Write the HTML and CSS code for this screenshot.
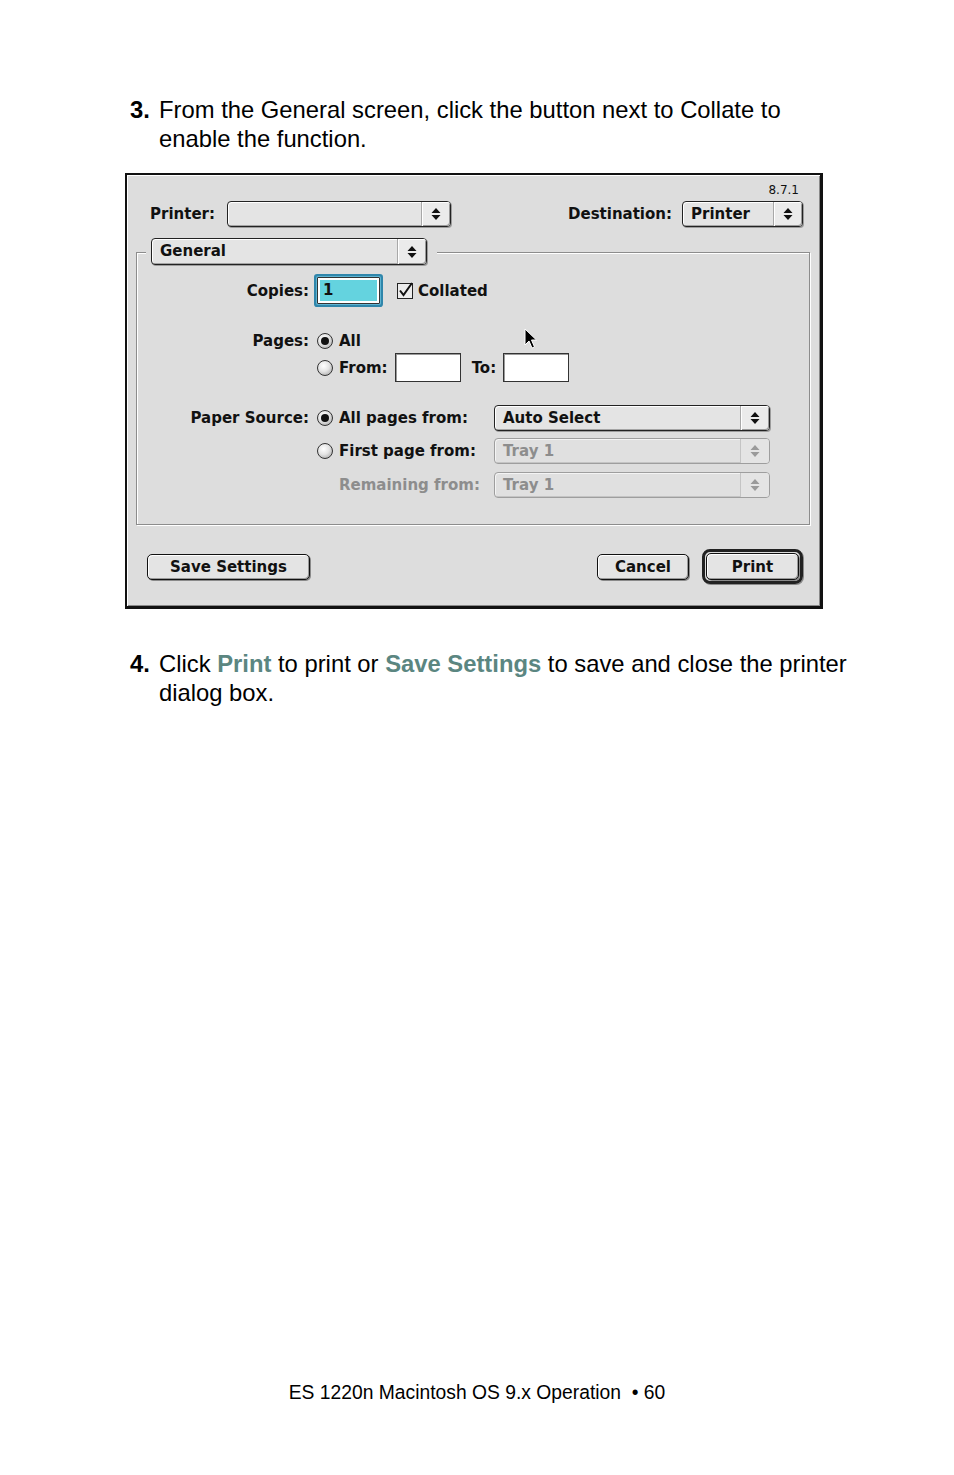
FILE: index.html
```html
<!DOCTYPE html>
<html lang="en">
<head>
    <meta charset="UTF-8">
    <title>Print dialog - General</title>
    <link rel="stylesheet" href="styles.css">
</head>
<body>

<div class="page">
    <div class="step">
        <span class="num">3.</span>
        <p>From the General screen, click the button next to Collate to enable the function.</p>
    </div>

    <div class="dialog">
        <div class="version">8.7.1</div>

        <div class="top-row">
            <span>Printer:</span>
            <div class="popup printer-pop">
                <span class="pop-text"></span>
                <span class="pop-arrow"><svg width="10" height="14" viewBox="0 0 10 14"><path d="M0.5 6 L5 1 L9.5 6 Z M0.5 8 L5 13 L9.5 8 Z"/></svg></span>
            </div>
            <span class="dest-lbl">Destination:</span>
            <div class="popup dest-pop">
                <span class="pop-text">Printer</span>
                <span class="pop-arrow"><svg width="10" height="14" viewBox="0 0 10 14"><path d="M0.5 6 L5 1 L9.5 6 Z M0.5 8 L5 13 L9.5 8 Z"/></svg></span>
            </div>
        </div>

        <div class="group">
            <div class="group-title">
                <div class="popup general-pop">
                    <span class="pop-text">General</span>
                    <span class="pop-arrow"><svg width="10" height="14" viewBox="0 0 10 14"><path d="M0.5 6 L5 1 L9.5 6 Z M0.5 8 L5 13 L9.5 8 Z"/></svg></span>
                </div>
            </div>

            <div class="row row-copies">
                <span class="row-lbl">Copies:</span>
                <div class="field focus"><span class="sel">1</span></div>
                <span class="check"><svg width="17" height="17" viewBox="0 0 17 17"><rect x="0.5" y="1.5" width="15" height="15" fill="#ececec" stroke="#222"/><path d="M3 8.5 L6.5 13 L15 1" fill="none" stroke="#111" stroke-width="2"/></svg></span>
                <span class="check-lbl">Collated</span>
            </div>

            <div class="row row-pages">
                <span class="row-lbl">Pages:</span>
                <span class="radio on"></span>
                <span class="opt-short">All</span>
            </div>
            <div class="row row-range">
                <span class="row-lbl"></span>
                <span class="radio"></span>
                <span class="opt-short">From:</span>
                <div class="field range"></div>
                <span class="to-lbl">To:</span>
                <div class="field range"></div>
            </div>

            <div class="row row-src">
                <span class="row-lbl">Paper Source:</span>
                <span class="radio on"></span>
                <span class="opt">All pages from:</span>
                <div class="popup src-pop">
                    <span class="pop-text">Auto Select</span>
                    <span class="pop-arrow"><svg width="10" height="14" viewBox="0 0 10 14"><path d="M0.5 6 L5 1 L9.5 6 Z M0.5 8 L5 13 L9.5 8 Z"/></svg></span>
                </div>
            </div>
            <div class="row row-first">
                <span class="row-lbl"></span>
                <span class="radio"></span>
                <span class="opt">First page from:</span>
                <div class="popup src-pop disabled">
                    <span class="pop-text">Tray 1</span>
                    <span class="pop-arrow"><svg width="10" height="14" viewBox="0 0 10 14"><path d="M0.5 6 L5 1 L9.5 6 Z M0.5 8 L5 13 L9.5 8 Z"/></svg></span>
                </div>
            </div>
            <div class="row row-rest">
                <span class="row-lbl"></span>
                <span class="radio-space"></span>
                <span class="opt dim">Remaining from:</span>
                <div class="popup src-pop disabled">
                    <span class="pop-text">Tray 1</span>
                    <span class="pop-arrow"><svg width="10" height="14" viewBox="0 0 10 14"><path d="M0.5 6 L5 1 L9.5 6 Z M0.5 8 L5 13 L9.5 8 Z"/></svg></span>
                </div>
            </div>
        </div>

        <div class="buttons">
            <span class="btn save-btn">Save Settings</span>
            <span class="btn cancel-btn">Cancel</span>
            <span class="default-ring"><span class="btn print-btn">Print</span></span>
        </div>

        <svg class="cursor" width="14" height="21" viewBox="0 0 14 21"><path d="M1 1 L1 17 L5 13 L8 20 L10.5 19 L7.5 12 L12.5 12 Z" fill="#000" stroke="#fff" stroke-width="1"/></svg>
    </div>

    <div class="step step-4">
        <span class="num">4.</span>
        <p>Click <span class="hl">Print</span> to print or <span class="hl">Save Settings</span> to save and close the printer dialog box.</p>
    </div>

    <div class="footer">ES 1220n Macintosh OS 9.x Operation  • 60</div>
</div>

</body>
</html>
```

FILE: styles.css
```css
* {
    padding: 0;
    margin: 0;
    box-sizing: border-box;
}
body {
    background: #fff;
    color: #000;
    font-family: "Liberation Sans", Arial, sans-serif;
}
.page {
    height: 1475px;
    display: flex;
    flex-direction: column;
    padding: 95px 0 71px 0;
}

/* steps */
.step {
    display: flex;
    padding-left: 130px;
    font-size: 23.8px;
    line-height: 29px;
}
.step .num {
    width: 29px;
    font-weight: bold;
    flex: none;
}
.step p {
    width: 694px;
}
.step-4 {
    margin-top: 40px;
}
.step .hl {
    color: #5b8681;
    font-weight: bold;
}
.footer {
    margin-top: auto;
    text-align: center;
    font-size: 19.3px;
    line-height: 22px;
    white-space: pre;
}

/* dialog */
.dialog {
    position: relative;
    margin: 20px 0 0 125px;
    width: 698px;
    height: 436px;
    background: #dddddd;
    border: 2px solid #111;
    border-right-width: 3px;
    border-bottom-width: 3px;
    box-shadow: inset 1px 1px #fff, inset -1px -1px #8a8a8a;
    padding-top: 8px;
    font-family: "DejaVu Sans", sans-serif;
    font-weight: bold;
    font-size: 15px;
    color: #111;
}
.dialog .version {
    text-align: right;
    padding-right: 21px;
    font-size: 12px;
    font-weight: normal;
    line-height: 14px;
}
.dialog .top-row {
    display: flex;
    align-items: center;
    height: 26px;
    margin-top: 4px;
    padding: 0 17px 0 23px;
}
.dialog .printer-pop {
    width: 224px;
    margin-left: 12px;
}
.dialog .dest-lbl {
    margin-left: auto;
    margin-right: 10px;
}
.dialog .dest-pop {
    width: 121px;
}

/* popup menus */
.popup {
    display: flex;
    height: 26px;
    border: 1px solid #222;
    border-radius: 4px;
    background: #e4e4e4;
    box-shadow: inset 1px 1px #fff, inset -1px -1px #a4a4a4, 1px 1px #9c9c9c;
    flex: none;
}
.popup .pop-text {
    flex: 1;
    padding-left: 8px;
    line-height: 24px;
    white-space: nowrap;
}
.popup .pop-arrow {
    width: 29px;
    display: flex;
    align-items: center;
    justify-content: center;
    border-left: 1px solid #a8a8a8;
    border-radius: 0 3px 3px 0;
    background: #ebebeb;
    box-shadow: inset 1px 1px #fff, inset -1px -1px #999;
}
.popup .pop-arrow svg {
    fill: #111;
}
.popup.disabled {
    border-color: #9e9e9e;
    color: #8d8d8d;
    background: #e0e0e0;
    box-shadow: inset 1px 1px #f4f4f4, inset -1px -1px #c4c4c4;
}
.popup.disabled .pop-arrow {
    border-left-color: #c4c4c4;
    background: #e4e4e4;
    box-shadow: none;
}
.popup.disabled .pop-arrow svg {
    fill: #9a9a9a;
}

/* group box */
.dialog .group {
    margin: 25px 10px 0 9px;
    height: 273px;
    border: 1px solid #8c8c8c;
    box-shadow: 1px 1px #fff, inset 1px 1px #fff;
    display: flex;
    flex-direction: column;
}
.dialog .group-title {
    align-self: flex-start;
    margin: -15px 0 0 9px;
    padding: 0 10px 0 5px;
    background: #dddddd;
}
.dialog .general-pop {
    width: 276px;
    height: 27px;
}
.dialog .row {
    display: flex;
    align-items: center;
}
.dialog .row-lbl {
    width: 172px;
    margin-right: 8px;
    text-align: right;
    flex: none;
}
.dialog .row-copies {
    margin-top: 12px;
    height: 27px;
}
.dialog .row-pages {
    margin-top: 25px;
    height: 24px;
}
.dialog .row-range {
    height: 29px;
}
.dialog .row-src {
    margin-top: 23px;
    height: 26px;
}
.dialog .row-first {
    margin-top: 7px;
    height: 26px;
}
.dialog .row-rest {
    margin-top: 8px;
    height: 26px;
}

/* text fields */
.field {
    background: #fff;
    border: 1px solid #333;
    box-shadow: inset 1px 1px #9a9a9a;
    flex: none;
}
.field.focus {
    width: 63px;
    height: 27px;
    padding: 2px;
    box-shadow: 0 0 0 1px #5fb4d2, 0 0 0 3px #2f86ab;
    border-radius: 1px;
}
.field.focus .sel {
    display: block;
    height: 100%;
    background: #64d3df;
    padding-left: 3px;
    line-height: 21px;
}
.field.range {
    width: 66px;
    height: 29px;
    margin-left: 7px;
}
.dialog .to-lbl {
    margin-left: 11px;
}

/* check box and radios */
.dialog .check {
    display: flex;
    margin-left: 17px;
}
.dialog .check-lbl {
    margin-left: 4px;
}
.radio {
    width: 16px;
    height: 16px;
    border-radius: 50%;
    border: 1px solid #333;
    background: radial-gradient(circle at 40% 35%, #fff 0, #e4e4e4 45%, #9a9a9a 100%);
    position: relative;
    flex: none;
}
.radio.on::after {
    content: "";
    position: absolute;
    left: 3px;
    top: 3px;
    width: 8px;
    height: 8px;
    border-radius: 50%;
    background: #111;
}
.radio-space {
    width: 16px;
    flex: none;
}
.dialog .opt-short {
    margin-left: 6px;
}
.dialog .opt {
    width: 155px;
    margin-left: 6px;
    white-space: nowrap;
    flex: none;
}
.dialog .opt.dim {
    color: #8d8d8d;
}
.dialog .src-pop {
    width: 276px;
}

/* buttons */
.dialog .buttons {
    display: flex;
    align-items: center;
    height: 35px;
    margin-top: 24px;
    padding: 0 17px 0 20px;
}
.btn {
    display: flex;
    align-items: center;
    justify-content: center;
    height: 26px;
    border: 1px solid #111;
    border-radius: 5px;
    background: #e4e4e4;
    box-shadow: inset 1px 1px #fff, inset -1px -1px #9a9a9a, 1px 1px #8a8a8a;
}
.dialog .save-btn {
    width: 163px;
}
.dialog .cancel-btn {
    width: 92px;
    margin-left: auto;
}
.dialog .default-ring {
    display: flex;
    width: 101px;
    height: 35px;
    margin-left: 13px;
    padding: 1px;
    border: 3px solid #222;
    border-radius: 8px;
    box-shadow: 1px 1px #8a8a8a;
}
.dialog .print-btn {
    width: 100%;
    height: 27px;
}

.dialog .cursor {
    position: absolute;
    left: 397px;
    top: 153px;
}
```
